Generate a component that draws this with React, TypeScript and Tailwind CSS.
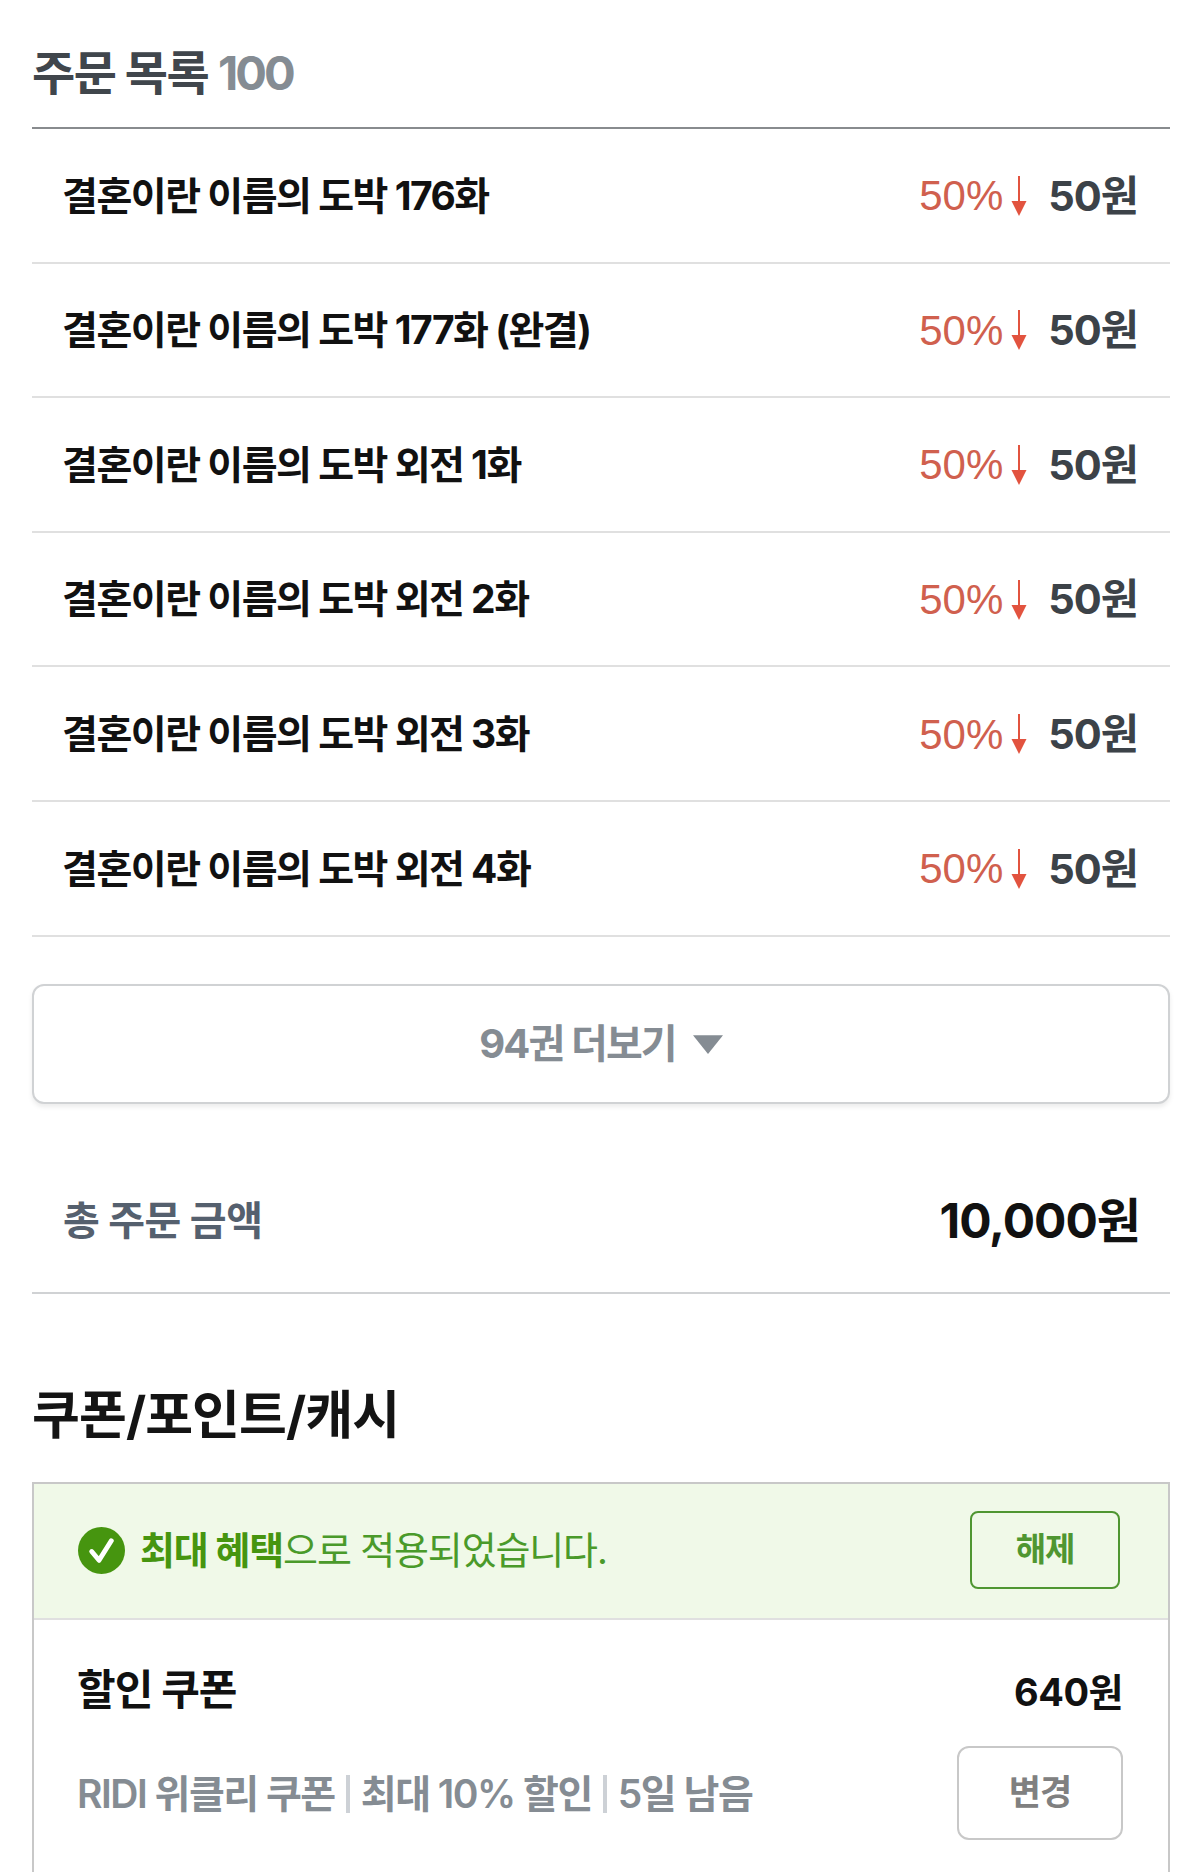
import React from "react";

const items = [
  "결혼이란 이름의 도박 176화",
  "결혼이란 이름의 도박 177화 (완결)",
  "결혼이란 이름의 도박 외전 1화",
  "결혼이란 이름의 도박 외전 2화",
  "결혼이란 이름의 도박 외전 3화",
  "결혼이란 이름의 도박 외전 4화",
];

const font = "font-['Inter','Noto_Sans_CJK_KR',sans-serif]";

const OrderRow = ({ title }: { title: string }) => (
  <li className="flex h-[134.6px] items-center justify-between border-b-2 border-[#e0e0e0] pl-[30px] pr-[32px] pt-[1px]">
    <span className="text-[39px] font-bold tracking-[-1.5px] text-[#111111]">{title}</span>
    <span className="flex items-center">
      <span className="font-['Liberation_Sans',sans-serif] text-[42px] font-normal tracking-[0px] text-[#d0604e]">50%</span>
      <svg width="16" height="40" viewBox="0 0 16 40" className="ml-[8px]">
        <rect x="7" y="0" width="2" height="28" fill="#e2533f" />
        <path d="M0.5 25h15L8 40z" fill="#e2533f" />
      </svg>
      <span className="ml-[21px] text-[41.5px] font-bold tracking-[-1px] text-[#3c4248]">50원</span>
    </span>
  </li>
);

export default function App() {
  return (
    <div className={`${font} h-[1872px] w-[1200px] overflow-hidden bg-white pl-[32px] pr-[30px]`}>
      <h2 className="flex h-[127px] items-center pt-[19px] text-[47px] font-bold tracking-[-1.6px] text-[#40464c]">
        주문 목록<span className="ml-[10px] tracking-[-3px] text-[#858c93]">100</span>
      </h2>
      <ul className="border-t-2 border-[#888b8e]">
        {items.map((title) => (
          <OrderRow key={title} title={title} />
        ))}
      </ul>

      <button className="mt-[47px] flex h-[120px] w-full items-center justify-center rounded-[12px] border-2 border-[#d0d2d4] bg-white shadow-[0_3px_5px_rgba(0,0,0,0.08)]">
        <span className="text-[40px] font-bold tracking-[-1.9px] text-[#858c93]">94권 더보기</span>
        <svg width="30" height="19" viewBox="0 0 32 20" className="ml-[17px] mt-[2px]">
          <path d="M0 0h32L16 20z" fill="#858c93" />
        </svg>
      </button>

      <div className="flex h-[190px] items-center justify-between border-b-2 border-[#d0d2d4] pl-[31px] pr-[30px] pt-[46px]">
        <span className="text-[40px] font-bold tracking-[-0.5px] text-[#55606e]">총 주문 금액</span>
        <span className="text-[48px] font-bold tracking-[-1px] text-[#111111]">10,000원</span>
      </div>

      <h2 className="flex h-[188px] items-center pt-[56px] text-[52px] font-bold tracking-[-0.9px] text-[#141414]">쿠폰/포인트/캐시</h2>

      <section className="h-[400px] border-2 border-[#c8c8c8]">
        <div className="flex h-[136px] items-center justify-between border-b-2 border-[#e0e0e0] bg-[#f0f9e8] pl-[44px] pr-[48px]">
          <div className="flex items-center">
            <svg width="47" height="47" viewBox="0 0 48 48">
              <circle cx="24" cy="24" r="24" fill="#46950f" />
              <path d="M14 25l7.5 9L34 14" fill="none" stroke="#ffffff" strokeWidth="5" strokeLinecap="round" strokeLinejoin="round" />
            </svg>
            <span className="ml-[15px] text-[38px] tracking-[-1.15px] text-[#4a9a2a]">
              <b className="font-bold text-[#46950f]">최대 혜택</b>으로 적용되었습니다.
            </span>
          </div>
          <button className="mb-[2px] h-[78px] w-[150px] rounded-[8px] border-2 border-[#4f9631] text-[33px] font-bold tracking-[-1px] text-[#4f9631]">해제</button>
        </div>
        <div className="flex items-center justify-between pl-[43px] pr-[45px] pt-[38px]">
          <span className="text-[42px] font-bold tracking-[-1px] text-[#111111]">할인 쿠폰</span>
          <span className="relative top-[3px] text-[38px] font-bold tracking-[-0.5px] text-[#111111]">640원</span>
        </div>
        <div className="mt-[25px] flex items-center justify-between pl-[43px] pr-[45px]">
          <span className="flex items-center pt-[3px] text-[39px] font-semibold tracking-[-1.5px] text-[#858c93]">
            RIDI 위클리 쿠폰
            <i className="mx-[11px] h-[38px] w-[4px] bg-[#cdd1d6]" />
            최대 10% 할인
            <i className="mx-[11px] h-[38px] w-[4px] bg-[#cdd1d6]" />
            5일 남음
          </span>
          <button className="h-[94px] w-[166px] rounded-[12px] border-2 border-[#c8c8c8] text-[35px] font-bold tracking-[-1px] text-[#808080]">변경</button>
        </div>
      </section>
    </div>
  );
}
